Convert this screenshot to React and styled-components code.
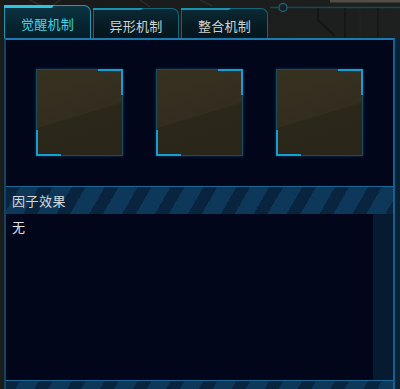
import React from "react";
import styled, { createGlobalStyle, css } from "styled-components";

const GlobalStyle = createGlobalStyle`
  html, body { margin: 0; padding: 0; background: #1b1d1c; }
  body { font-family: "Noto Sans CJK SC", "Noto Sans", sans-serif; }
  * { box-sizing: border-box; }
`;

const Root = styled.div`
  position: relative;
  width: 400px;
  height: 389px;
  overflow: hidden;
  background: linear-gradient(90deg, #1f1d18 0px, #17191a 6px, #1c1e1d 60%, #1e201f 100%);
`;

const BgArt = styled.svg`
  position: absolute;
  top: 0;
  left: 0;
  z-index: 0;
`;

const Frame = styled.div`
  position: relative;
  z-index: 1;
  padding-left: 4px;
  display: flex;
  flex-direction: column;
`;

const TabBar = styled.div`
  display: flex;
  align-items: flex-end;
  gap: 2px;
  height: 38px;
`;

const Tab = styled.div`
  position: relative;
  width: ${(p) => p.$w}px;
  height: ${(p) => (p.$active ? 33 : 30)}px;
  display: flex;
  align-items: center;
  justify-content: center;
  padding-top: 3px;
  font-size: 13px;
  letter-spacing: 0.3px;
  border: 1px solid #17667c;
  border-bottom: none;
  border-top-right-radius: 7px;
  color: #cfd2d2;
  background: linear-gradient(180deg, #0b2a35 0%, #061a22 60%, #05161d 100%);
  &::before {
    content: "";
    position: absolute;
    top: -1px;
    left: -1px;
    width: 50px;
    height: 2px;
    background: #1a93b3;
    clip-path: polygon(0 0, 100% 0, calc(100% - 2px) 100%, 0 100%);
  }
  ${(p) =>
    p.$active &&
    css`
      color: #3cd3e4;
      border-color: #1f97b6;
      background: linear-gradient(180deg, #0c3442 0%, #072431 60%, #061d28 100%);
      &::before {
        background: #2ec3e3;
        height: 3px;
      }
    `}
`;

const Body = styled.div`
  display: flex;
`;

const Panel = styled.div`
  width: 391px;
  border-left: 2px solid #0c4766;
  border-right: 2px solid #16618b;
  border-top: 2px solid #1b7bb0;
  background: #02061a;
  display: flex;
  flex-direction: column;
`;

const SideStrip = styled.div`
  flex: 1;
  background: #0a2236;
`;

const SlotRow = styled.div`
  display: flex;
  justify-content: center;
  gap: 33px;
  padding-top: 29px;
  height: 146px;
`;

const Slot = styled.div`
  position: relative;
  width: 87px;
  height: 87px;
  border: 1px solid #1d4c5d;
  box-shadow: 0 0 3px rgba(24, 120, 170, 0.45);
  background: linear-gradient(
    163deg,
    #37321f 0%,
    #322d1f 52%,
    #2b2719 53%,
    #29251a 100%
  );
  &::before,
  &::after {
    content: "";
    position: absolute;
    width: 23px;
    height: 24px;
    border: 0 solid #169ed3;
  }
  &::before {
    top: -1px;
    right: -1px;
    border-top-width: 2px;
    border-right-width: 2px;
  }
  &::after {
    bottom: -1px;
    left: -1px;
    border-bottom-width: 2px;
    border-left-width: 2px;
  }
`;

const SectionHeader = styled.div`
  height: 28px;
  display: flex;
  align-items: center;
  padding-left: 6px;
  padding-bottom: 1px;
  font-size: 13px;
  letter-spacing: 0.5px;
  color: #d6d8d8;
  border-top: 1px solid #1b6897;
  background:
    repeating-linear-gradient(
      120deg,
      rgba(4, 22, 42, 0.5) 0px,
      rgba(4, 22, 42, 0.5) 12px,
      rgba(30, 100, 150, 0.1) 12px,
      rgba(30, 100, 150, 0.1) 28.5px
    ),
    #0c3354;
`;

const Content = styled.div`
  display: flex;
  height: 166px;
`;

const TextArea = styled.div`
  flex: 1;
  padding: 4px 6px;
  font-size: 13px;
  line-height: 18px;
  color: #e0e2e2;
`;

const ScrollTrack = styled.div`
  width: 20px;
  background: #061b32;
`;

export default function App() {
  const tabs = [
    { label: "觉醒机制", w: 87, active: true },
    { label: "异形机制", w: 86 },
    { label: "整合机制", w: 87 },
  ];
  return (
    <>
      <GlobalStyle />
      <Root>
        <BgArt width="400" height="40" viewBox="0 0 400 40">
          <rect x="330" y="0" width="70" height="2.5" fill="#534c47" />
          <line x1="287" y1="7.5" x2="400" y2="7.5" stroke="#134a5a" strokeWidth="1.5" />
          <circle cx="283" cy="7.5" r="4" fill="none" stroke="#195f72" strokeWidth="1.5" />
          <line x1="279" y1="7.5" x2="270" y2="7.5" stroke="#134a5a" strokeWidth="1.5" />
          <path d="M318 8 L318 20 L335 36" fill="none" stroke="#141616" strokeWidth="2" />
          <line x1="345" y1="8" x2="345" y2="38" stroke="#161818" strokeWidth="2" />
          <line x1="360" y1="8" x2="360" y2="38" stroke="#232524" strokeWidth="1" />
          <line x1="378" y1="8" x2="378" y2="38" stroke="#161818" strokeWidth="2" />
          <path d="M30 0 L42 6 M60 0 L52 6 M140 0 L150 7 M200 0 L212 6" stroke="#2a2c2b" strokeWidth="1.5" />
        </BgArt>
        <Frame>
          <TabBar>
            {tabs.map((t) => (
              <Tab key={t.label} $w={t.w} $active={t.active}>
                {t.label}
              </Tab>
            ))}
          </TabBar>
          <Body>
            <Panel>
              <SlotRow>
                <Slot />
                <Slot />
                <Slot />
              </SlotRow>
              <SectionHeader>因子效果</SectionHeader>
              <Content>
                <TextArea>无</TextArea>
                <ScrollTrack />
              </Content>
              <SectionHeader>技能效果</SectionHeader>
            </Panel>
            <SideStrip />
          </Body>
        </Frame>
      </Root>
    </>
  );
}
